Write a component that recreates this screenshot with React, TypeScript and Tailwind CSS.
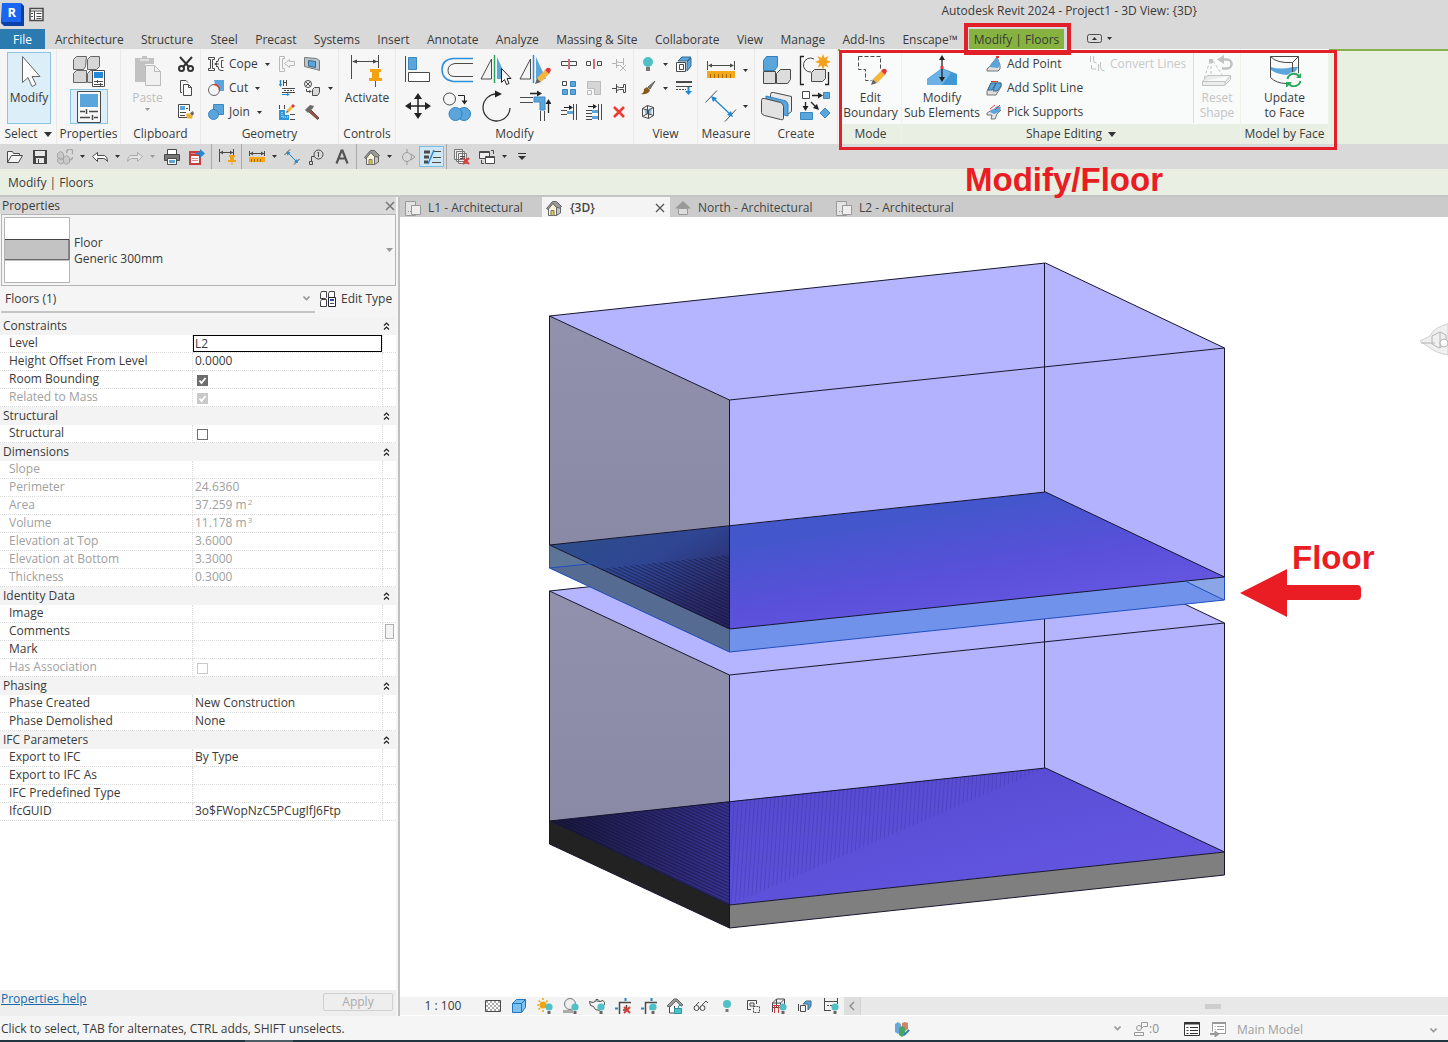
import type { ReactNode } from 'react';

const INK = '#4a4a4a';
const BLUE = '#5aa5dc';

function Ico({ w = 16, h = w, box, children }: { w?: number; h?: number; box?: string; children: ReactNode }) {
  return (
    <svg width={w} height={h} viewBox={box ?? `0 0 ${w} ${h}`} fill="none" stroke={INK} strokeWidth="1" className="shrink-0" aria-hidden="true">
      {children}
    </svg>
  );
}

function Caret({ dim = false }: { dim?: boolean }) {
  return (
    <svg width="5" height="3" viewBox="0 0 5 3" className="shrink-0" aria-hidden="true">
      <path d="M0 0h5L2.5 3z" fill={dim ? '#9a9a9a' : '#333'} />
    </svg>
  );
}

function Chevron() {
  return (
    <svg width="7" height="5" viewBox="0 0 7 5" fill="none" stroke="#9a9a9a" strokeWidth="1.6" className="pointer-events-none shrink-0" aria-hidden="true">
      <path d="M.5 .5l3 3 3-3" />
    </svg>
  );
}

/* ---------- shared icon pieces ---------- */

const bulb = (x: number, y: number) => (
  <g stroke="none">
    <circle cx={x} cy={y} r="3.6" fill="#4fc0c6" />
    <path d={`M${x - 1.5} ${y + 4}h3v3h-3z`} fill="#666" />
  </g>
);

const redCross = (x: number, y: number, s: number) => (
  <path d={`M${x} ${y}l${s} ${s}M${x + s} ${y}l${-s} ${s}`} stroke="#e03a34" strokeWidth="2" />
);

const pencil = (
  <g stroke="none">
    <path d="M16 30l2-6 4 4z" fill="#666" />
    <path d="M18 24l8-8 4 4-8 8z" fill="#f3b73e" />
    <path d="M26 16l2-2q3-1 4 2l-2 4z" fill="#e0393a" />
  </g>
);

const pin = (
  <g stroke="none" fill="#f2a30f">
    <path d="M20 14h11v3h-2v6h3v3H19v-3h3v-6h-2z" />
    <path d="M25 26h1v6h-1z" fill="#555" />
  </g>
);

const ruler = (
  <>
    <path d="M.5 1v9M27.5 1v9M2 5.500h24" />
    <path d="M1 5.500l4-2v4zM27 5.500l-4-2v4z" fill={INK} stroke="none" />
    <path d="M0 11h28v7H0z" fill="#f5a81c" stroke="none" />
    <path d="M3.500 14v4M7.500 14v4M11.500 14v4M15.500 14v4M19.500 14v4M23.500 14v4" stroke="#a86c00" />
  </>
);

const house = (
  <>
    <path d="M2.500 7.500L7 3l3.500 4.500v8h-8z" fill="#f7f3d4" stroke="#666" />
    <path d="M10.500 15.500l4-2.500V6l-4 2z" fill="#c4c4c4" stroke="#666" />
    <path d="M.5 8.500L6.500 1.500h4l5 5-2 1.500-3-.5L7 3.500l-5 6z" fill="#9a9a9a" stroke="#666" />
    <path d="M5 10.500h3v5H5z" fill="#e9c93c" stroke="#777" />
  </>
);

/* ---------- small ribbon icons ---------- */

const CutClip = () => (
  <Ico><path d="M2 1l9 10M14 1L5 11" stroke="#333" strokeWidth="2" /><circle cx="3.500" cy="12.500" r="2.500" stroke="#333" strokeWidth="2" /><circle cx="12.500" cy="12.500" r="2.500" stroke="#333" strokeWidth="2" /></Ico>
);
const CopyClip = () => (
  <Ico><path d="M4 12.500H2.500V.5H8l2 2" /><path d="M5.500 4.500h5l3 3v8h-8z" fill="#fafafa" /><path d="M10.500 4.500v3h3" /></Ico>
);
const MatchType = () => (
  <Ico><path d="M9 13.500H.5V.5h11V7" fill="#fff" /><path d="M2 2h5v4H2z" fill={BLUE} stroke="none" /><path d="M2 8.500h6M2 11.500h5M8 4.500h2" /><path d="M8 10l3-1 4 4-2 2-4-1z" fill="#f0b030" stroke="none" /><path d="M12 9l3-2 1 3-2 2z" fill="#666" stroke="none" /></Ico>
);
const Cope = () => (
  <Ico><path d="M.5 1.500h6v2h-2v9h2v2h-6v-2h2v-9h-2z" /><path d="M15.500 1.500H13q-3 0-3 4H8M15.500 14.500H13q-3 0-3-4H8M15.500 4.500h-2v7h2" /><path d="M8 8h3" /><path d="M6 8l3-2v4z" fill={INK} stroke="none" /></Ico>
);
const CutGeom = () => (
  <Ico><path d="M6 0h10v11H9z" fill={BLUE} stroke="none" /><circle cx="6" cy="10" r="5.500" fill="#f6f6f6" stroke="#666" /><path d="M6 4.500a5.500 5.500 0 0 1 5.500 6" stroke="#e03a34" strokeWidth="1.500" /></Ico>
);
const JoinGeom = () => (
  <Ico><path d="M5.500.5h10v10h-10z" fill={BLUE} stroke="#3b88c0" /><circle cx="5.500" cy="10.500" r="5" fill={BLUE} stroke="#3b88c0" /></Ico>
);
const JoinRoof = () => (
  <Ico><g stroke="#b9b9b9"><path d="M5.500 2.500v-2h-5v15h5v-3h-2v-10zM15.500 5.500h-5v-2l-5 4 5 4v-2h5z" /></g></Ico>
);
const WallJoin = () => (
  <Ico><path d="M1.500 0v6" stroke="#1e88d2" strokeWidth="1.500" /><path d="M0 4l1.500 3L3 4z" fill="#1e88d2" stroke="none" /><path d="M4.500 0v6M7.500 0v6M5 2.500h3M3 8.500h13M3 12.500h13" /><path d="M5 10.500h10" strokeDasharray="2 1" /><path d="M3 14.500h6" stroke="#1e88d2" /><path d="M8 13l3 1.500L8 16z" fill="#1e88d2" stroke="none" /></Ico>
);
const CutJoin = () => (
  <Ico><path d="M.5 1v4M5.500 1v4M11 10.500h5M11 15.500h5" /><path d="M0 6h6v5h4v5H0z" fill="#2f96dc" stroke="none" /><path d="M3 8v5h6" stroke="#fff" strokeDasharray="1 1" /><path d="M7 9l1-3 2 2z" fill="#666" stroke="none" /><path d="M8 6l4-4 2 2-4 4z" fill="#f3b73e" stroke="none" /><path d="M12 2l2-2 2 2-2 2z" fill="#e0393a" stroke="none" /></Ico>
);
const WallOpening = () => (
  <Ico><path d="M.5 1.500l12 1 3 2v10l-3-1-12-3z" fill="#b9c4cc" stroke="#777" /><path d="M4.500 4.500l7 1v6l-7-1.500z" fill={BLUE} stroke="#3a6a8c" /></Ico>
);
const BeamCol = () => (
  <Ico><circle cx="4" cy="4" r="3.500" /><path d="M1.500 1.500l5 5M6.500 1.500l-5 5" /><path d="M2.500 9v2.500H6" /><path d="M5 10l3 1.500L5 13z" fill={INK} stroke="none" /><path d="M8.500 9.500l2-2h5v5l-2 3h-5z" fill="#d8d8d8" /></Ico>
);
const Hammer = () => (
  <Ico><path d="M6 5l9 9-1.500 1.500L4 7z" fill="#9a5548" stroke="#70433a" /><path d="M1 6l5-5 4 1-1 2-5 5z" fill="#6a6a6a" stroke="none" /></Ico>
);
const SplitEl = () => <Ico><path d="M6 5.500H.5v4H6M10 5.500h5.500v4H10M3 7.500" /><path d="M8 3v10" stroke="#c8414b" strokeWidth="1.500" /><path d="M5 5.500h2M5 9.500h2M9 5.500h2M9 9.500h2" /></Ico>;
const SplitGap = () => <Ico><path d="M.5 5.500h4v4h-4zM11.500 5.500h4v4h-4z" /><path d="M8 3v10" stroke="#c8414b" strokeWidth="1.500" /></Ico>;
const Unpin = () => <Ico><g stroke="#b5b5b5"><path d="M1 7.500h4M5.500 3v9M5.500 5.500l3 1h4M5.500 9.500h3M12.500 2v7M9 9l6 6M15 9l-6 6" /></g></Ico>;
const ArrayEl = () => <Ico><path d="M1.500 1.500h4v4h-4z" /><path d="M9.500 1.500h5v5h-5zM1.500 9.500h5v5h-5zM9.500 9.500h5v5h-5z" fill={BLUE} stroke="#3b88c0" /></Ico>;
const ScaleEl = () => <Ico><path d="M1.500 1.500h13v13h-6v-6h-7z" fill="#d5d5d5" stroke="#bbb" /><path d="M1.500 10.500h4v4h-4z" stroke="#bbb" /></Ico>;
const PinEl = () => <Ico><path d="M1 8.500h4M5.500 4v9M5.500 6.500l3 1h4v-3h2v8h-2v-3h-4l-3 1" /></Ico>;
const TrimOne = () => <Ico><path d="M3 3.500h6" stroke="#222" /><path d="M8 1l4 2.500L8 6z" fill="#222" stroke="none" /><path d="M12.500 0v16M15.500 0v16M0 6.500h6M0 10.500h6" /><path d="M6 7h6v3H6z" fill={BLUE} stroke="none" /></Ico>;
const TrimMany = () => <Ico><path d="M2 2.500h6" stroke="#222" /><path d="M7 0l4 2.500L7 5z" fill="#222" stroke="none" /><path d="M12.500 0v16M15.500 0v16M0 6.500h6M0 9.500h6M0 12.500h6M0 15.500h6" /><path d="M6 6h6v3H6zM6 12h6v3H6z" fill={BLUE} stroke="none" /></Ico>;
const DeleteEl = () => <Ico><path d="M3 3l10 10M13 3L3 13" stroke="#ee3b33" strokeWidth="2.600" /></Ico>;
const Bulb = () => <Ico><circle cx="8" cy="6" r="5" fill="#4fc0c6" stroke="none" /><path d="M6 11h4v4H6z" fill="#777" stroke="none" /></Ico>;
const Brush = () => <Ico><path d="M8 7l7-6-5 8z" fill="#777" stroke="#666" /><path d="M0 14q4 0 4-5l3-2 3 3q-1 5-10 4z" fill="#8a5a1c" stroke="none" /></Ico>;
const DisplaceBox = () => <Ico><path d="M4.500 6l7-2v6l-6 1z" fill={BLUE} fillOpacity=".7" stroke="none" /><path d="M2.500 4.500l5-3 6 2v8l-5 3-6-2zM2.500 4.500l6 2 5-3M8.500 6.500v8M7.500 1.500v8l-5 3M7.500 9.500l6 2" /></Ico>;
const CubeView = () => <Ico><path d="M.5 6.500h9v9h-9z" fill="#fff" /><path d="M3.500 8.500h4v5h-4z" /><path d="M2 5l4-4h9l-4 4zM11 6l4-4v8l-4 5z" fill={BLUE} stroke="#3b6a8c" /></Ico>;
const Linework = () => <Ico><path d="M0 2h16" strokeWidth="2" /><path d="M0 6.500h16" /><path d="M0 9.500h10" strokeDasharray="2 1" /><path d="M12.500 7v6" stroke="#1e88d2" strokeWidth="2" /><path d="M9 11h7l-3.500 4z" fill="#1e88d2" stroke="none" /></Ico>;
const AddPoint = () => <Ico><path d="M1 13l3-3 7-9 3 8v4l-2 2H1z" fill="#ddd" stroke="#777" /><path d="M3 11l8-10 3 8-2 3z" fill={BLUE} stroke="none" /><path d="M10 0h3v2h-3z" fill="#e03a34" stroke="none" /></Ico>;
const AddSplit = () => <Ico><path d="M1 11l4-8h10v4l-5 8H1z" fill="#ddd" stroke="#777" /><path d="M5 3h5l-4 7H2zM10 3h5v3l-4 5H7z" fill={BLUE} stroke="#3b6a8c" /><path d="M5 1.500h7" stroke="#e03a34" /></Ico>;
const PickSup = () => <Ico><path d="M1 9l5-3h9l-4 4-2 5H5l1-4H1z" fill="#e4e4e4" stroke="#777" /><path d="M4 8l7-6 4 1-2 5-5 2z" fill={BLUE} stroke="none" /><path d="M4 5l5-4M9 6l5-5" stroke="#e03a34" /></Ico>;
const ConvertLines = () => <Ico><g stroke="#c0c0c0"><path d="M1.500 0v6M4.500 0v4q0 3 3 3M2.500 9v4H7M9.500 8v7M11.500 6v5q0 4 4 4" /></g></Ico>;

/* ---------- large ribbon icons ---------- */

const Arrow = () => <Ico w={32}><path d="M9.500 1.500v26l5.500-5 4 9 4-2-4-8h8z" fill="#fff" stroke="#666" /></Ico>;
const TypeProps = () => (
  <Ico w={34} h={32}>
    <g fill="#d6d6d6" stroke="#666">
      <path d="M1.500 4.500l3-3h10l-1 10-2 3h-10zM15.500 4.500l3-3h9v10l-3 3h-9zM1.500 18.500l3-3h10v12h-13zM15.500 18.500l3-3h9v12h-12z" />
    </g>
    <path d="M20.500 15.500h12v16h-12z" fill="#fff" />
    <path d="M22 17h9v6h-9z" fill="#2389d7" stroke="none" />
    <path d="M22 26.500h9M22 29.500h9M25.500 25v3M28.500 28v3" />
  </Ico>
);
const PropsPalette = () => (
  <Ico w={24} h={32}><path d="M.5.5h23v31H.5z" fill="#f8f8f8" /><path d="M3 3h18v13H3z" fill={BLUE} stroke="none" /><path d="M3 20.500h5M12 20.500h9M9.500 18v5M3 26.500h10M17 26.500h4M15.500 24v5" strokeWidth="1.500" /></Ico>
);
const PasteClip = () => (
  <Ico w={32}><path d="M3 3h7V1h5v2h7v6h-9v18H3z" fill="#c2c2c2" stroke="none" /><path d="M8 5h9" stroke="#fff" /><path d="M13.500 10.500h9l6 6v14h-15z" fill="#f1f1f1" stroke="#bbb" /><path d="M22.500 10.500v6h6" stroke="#bbb" /></Ico>
);
const ActivateDim = () => <Ico w={34} h={32}><path d="M1.500 0v24M28.500 0v13M3 6.500h25" /><path d="M2 6.500l5-2v4zM28 6.500l-5-2v4z" fill={INK} stroke="none" />{pin}</Ico>;
const AlignEl = () => <Ico w={32}><path d="M3.500 2v26" /><path d="M6.500 3.500h8v12h-8z" fill={BLUE} stroke="#3b88c0" /><path d="M6.500 18.500h21v9h-21z" fill="#fff" /></Ico>;
const OffsetEl = () => <Ico w={32}><path d="M32 4.500H12q-11 1-11 11t11 12h20" stroke="#2f8fd8" strokeWidth="1.500" /><path d="M32 9.500H14q-7 1-7 7t7 6h18" /></Ico>;
const mirror = (
  <>
    <path d="M11.500 5v20H1z" fill="#f3f3f3" />
    <path d="M17 3v22h10z" fill={BLUE} stroke="none" />
  </>
);
const MirrorPick = () => <Ico w={32}>{mirror}<path d="M14.500 1v28" stroke="#2aa35b" strokeWidth="1.500" /><path d="M21.500 14.500v14l3-3 2 5 2.500-1-2-5h4z" fill="#fff" stroke="#222" /></Ico>;
const MirrorDraw = () => <Ico w={32}>{mirror}<path d="M14.500 1v28" stroke="#2f8fd8" strokeWidth="1.500" />{pencil}</Ico>;
const MoveEl = () => <Ico w={32}><path d="M16 6v20M6 16h20" stroke="#222" strokeWidth="1.500" /><path d="M16 3l4 6h-8zM16 29l4-6h-8zM3 16l6-4v8zM29 16l-6-4v8z" fill="#222" stroke="none" /></Ico>;
const CopyEl = () => <Ico w={32}><circle cx="8.500" cy="9" r="6" /><path d="M17 5.500h6.500V12" stroke="#222" /><path d="M20.500 10.500h6l-3 4z" fill="#222" stroke="none" /><circle cx="23" cy="24" r="6.500" fill={BLUE} stroke="#2f80bd" /><circle cx="14.500" cy="24" r="6.500" fill={BLUE} stroke="#2f80bd" /></Ico>;
const RotateEl = () => <Ico w={32}><path d="M17 4A13.500 13.500 0 1 0 30 18" stroke="#333" strokeWidth="1.300" /><path d="M15 .5l7 3.500-7 3.500z" fill="#222" stroke="none" /></Ico>;
const TrimEl = () => <Ico w={32}><path d="M11 3.500h8M29.500 13v10" stroke="#222" strokeWidth="1.300" /><path d="M18 .5l5 3-5 3zM26.500 14h6l-3-5z" fill="#222" stroke="none" /><path d="M1 7.500h13M1 12.500h13M21.500 21v10M25.500 21v10" /><path d="M15 7h11v13h-5v-8h-6z" fill={BLUE} stroke="#3b88c0" /></Ico>;
const MeasureEl = () => <Ico w={28} h={20}>{ruler}</Ico>;
const DimEl = () => <Ico w={32}><path d="M.5 12.500L12 .5M20 31.500l11-12" /><path d="M8 8l18 17" stroke="#1e88d2" strokeWidth="1.300" /><path d="M6 6l6 2-4 4zM28 27l-6-2 4-4z" fill="#1e88d2" stroke="none" /></Ico>;
const AssemblyEl = () => <Ico w={32}><path d="M2.500 17.500h12v12h-12zM15.500 19.500l4-4h10v10l-3 4h-11z" fill="#dcdcdc" /><path d="M2.500 6.500l3-4h11v10l-3 4h-11z" fill={BLUE} stroke="#2f80bd" /></Ico>;
const GroupEl = () => <Ico w={32}><path d="M5 2.500H1.500v28H5M26 30.500h3.500V18" stroke="#222" strokeWidth="1.300" /><path d="M15 5a7 7 0 1 0-3 13" /><path d="M12.500 18.500l3-3h11v9l-3 3h-11z" fill="#dcdcdc" /><path d="M24 0l1.500 4 4-2-2 4L32 8l-4.500 1.500 2 4-4-2L24 16l-1.500-4.500-4 2 2-4L16 8l4.500-2-2-4 4 2z" fill="#f4a01c" stroke="none" /></Ico>;
const PartsEl = () => <Ico w={32}><path d="M9.500 4.500q0-3 3-2l18 4v15l-4 3-17-5z" fill="#e9e9e9" /><path d="M5 6l20 5 2 3v12L5 20z" fill={BLUE} stroke="#2f80bd" /><path d="M.5 10.500q0-3 3-2l16 4q3 1 3 4v12q0 2-3 1l-16-4q-3-1-3-3z" fill="#e2e2e2" /></Ico>;
const SimilarEl = () => <Ico w={32}><path d="M3.500 1.500h7v7h-7z" fill="#fff" /><path d="M13 5.500h7M6.500 12v6M12 12l5 5" stroke="#222" strokeWidth="1.300" /><path d="M19 2.500l5 3-5 3zM3.500 16h6l-3 5zM20 20l-6-2 4-4z" fill="#222" stroke="none" /><path d="M24.500 2.500h6v6h-6zM1.500 22.500h12v7h-12zM26 18l5 5-5 5-5-5z" fill={BLUE} stroke="#3b88c0" /></Ico>;
const EditBoundary = () => <Ico w={32}><path d="M3.500 1.500h22v13M3.500 1.500v13h7v11h6" strokeDasharray="4 2" />{pencil}</Ico>;
const SubElements = () => (
  <Ico w={32}><path d="M1 30V24l15-11 15 6v11z" fill="#3f97d6" stroke="none" /><path d="M1 25l15-12 9 5-9 12H1z" fill="#6cb2e4" stroke="none" /><path d="M16 4v21" stroke="#222" strokeWidth="1.300" /><path d="M16 0l3 5h-6zM16 27l3-5h-6z" fill="#222" stroke="none" /><path d="M14.500 11h3v3h-3z" fill="#e03a34" stroke="none" /></Ico>
);
const ResetShape = () => (
  <Ico w={32}><g stroke="#c2c2c2"><path d="M1.500 26.500l5-6h23l-5 6zM1.500 26.500v4h22l6-6v-4M24 26.500v4" fill="#ececec" /><path d="M9 6L3 24M12 6l10 15M10 6v14" strokeDasharray="3 2" /><path d="M22 4.500h4a4.500 4.500 0 0 1 0 9h-5" strokeWidth="2.500" /></g><path d="M16 4.500l7-4.500v9zM8 4h4v4H8z" fill="#c2c2c2" stroke="none" /></Ico>
);
const UpdateFace = () => (
  <Ico w={32}><path d="M2 12q9 3 22 0h5q-2 7-12 8-10-1-15-5z" fill={BLUE} stroke="none" /><path d="M1.500 1.500v21q6 6 16 6M1.500 1.500h28v17M1.500 1.500q6 7 22 6l6-6M23.500 7.500V17" /><circle cx="25" cy="25" r="8" fill="#fafafa" stroke="none" /><path d="M18.500 24a6.500 6.500 0 0 1 12-2M31.500 26a6.500 6.500 0 0 1-12 2" stroke="#2aa95a" strokeWidth="2" /><path d="M27 23h6v-6zM23 27h-6v6z" fill="#2aa95a" stroke="none" /></Ico>
);

/* ---------- ribbon building blocks ---------- */

function Panel({ title, width, children, more = false, ctx = false }: { title: string; width: string; children: ReactNode; more?: boolean; ctx?: boolean }) {
  return (
    <section className={`${width} flex shrink-0 flex-col border-r ${ctx ? 'border-[#eef3ea] bg-[#f9fafa]' : 'border-[#e9e9e9] bg-[#f6f6f6]'}`}>
      <div className="flex h-[75px] pt-[3px]">{children}</div>
      <h2 className={`flex h-5 items-center justify-center gap-[6px] whitespace-nowrap ${ctx ? 'bg-[#e9f0e3]' : ''}`}>
        {title}
        {more && <svg width="8" height="5" viewBox="0 0 8 5" aria-hidden="true"><path d="M0 0h8L4 5z" fill="#333" /></svg>}
      </h2>
    </section>
  );
}

function Big({ icon, lines, dim = false, on = false, width = 'w-full' }: { icon: ReactNode; lines: string[]; dim?: boolean; on?: boolean; width?: string }) {
  return (
    <button type="button" className={`${width} flex h-[72px] shrink-0 flex-col items-center gap-[3px] pt-[2px] leading-[15px] ${on ? 'border border-[#8cc4e4] bg-[#dceef8]' : 'border border-transparent'} ${dim ? 'text-[#c4c4c4]' : ''}`}>
      {icon}
      <span className="whitespace-nowrap">{lines.map((l) => <span key={l} className="block">{l}</span>)}</span>
    </button>
  );
}

function Tool({ label, icon, className = '' }: { label: string; icon: ReactNode; className?: string }) {
  return <button type="button" aria-label={label} className={`flex shrink-0 items-center justify-center ${className}`}>{icon}</button>;
}

function RowTool({ icon, label, menu = false, dim = false }: { icon: ReactNode; label: string; menu?: boolean; dim?: boolean }) {
  return (
    <button type="button" className={`flex h-6 items-center gap-[5px] whitespace-nowrap ${dim ? 'text-[#c8c8c8]' : ''}`}>
      {icon}
      {label}
      {menu && <span className="pl-[2px]"><Caret /></span>}
    </button>
  );
}

const TABS = ['Architecture', 'Structure', 'Steel', 'Precast', 'Systems', 'Insert', 'Annotate', 'Analyze', 'Massing & Site', 'Collaborate', 'View', 'Manage', 'Add-Ins', 'Enscape™'];

function TitleBar() {
  return (
    <header className="flex h-7 items-center bg-[#d9d9d9]">
      <div className="flex flex-1 items-center gap-[5px]">
        <svg width="24" height="24" viewBox="0 0 24 24" aria-hidden="true">
          <path d="M2 1h19l3 3v20H4l-3-3z" fill="#0b3fa8" />
          <path d="M2 1h19v19H2z" fill="#1a66f0" />
          <text x="7.500" y="15" fill="#fff" fontSize="13" fontWeight="700" fontFamily="Open Sans, sans-serif">R</text>
        </svg>
        <Ico w={15} h={15}><path d="M1 1.500h13v12H1z" fill="#fff" strokeWidth="1.500" /><path d="M1 4h13M5.500 4v10M2 6.500h2M2 9.500h2M7.500 6.500h5M7.500 9.500h5M7.500 11.500h5" /></Ico>
      </div>
      <h1 className="whitespace-nowrap pb-[7px]">Autodesk Revit 2024 - Project1 - 3D View: {'{3D}'}</h1>
      <div className="w-[251px] shrink-0" />
    </header>
  );
}

function RibbonTabs() {
  return (
    <nav className="flex h-[21px] shrink-0 items-stretch whitespace-nowrap bg-[#d9d9d9] leading-[21px]">
      <a href="#file" className="mt-px w-[45px] bg-[#2b7ab0] text-center text-white">File</a>
      <div className="flex w-[924px] shrink-0 justify-between pl-[10px] pr-[11px] pt-px">
        {TABS.map((t) => <a key={t} href={`#${t}`}>{t}</a>)}
      </div>
      <a href="#modify-floors" className="relative mt-px w-[95px] bg-[#86b33f] text-center">
        Modify | Floors
        <span className="pointer-events-none absolute -bottom-[6px] -left-[5px] -right-[7px] -top-[6px] z-20 border-4 border-[#e1202a]" />
      </a>
      <button type="button" aria-label="Minimize ribbon" className="ml-[23px] flex items-center gap-[5px]">
        <Ico w={15} h={9}><rect x=".5" y=".5" width="14" height="8" rx="2" /><path d="M5 6h5L7.500 3z" fill="#333" stroke="none" /></Ico>
        <Caret />
      </button>
    </nav>
  );
}

function Ribbon() {
  return (
    <div className="flex h-[95px] shrink-0 bg-[#f6f6f6]">
      <Panel title="Select" width="w-[57px]" more>
        <Big on width="ml-[7px] w-[44px]" icon={<Arrow />} lines={['Modify']} />
      </Panel>
      <Panel title="Properties" width="w-[64px]">
        <div className="flex w-full flex-col items-center">
          <Tool label="Type properties" className="h-[37px] w-[38px]" icon={<TypeProps />} />
          <Tool label="Properties palette" className="h-[35px] w-[38px] border border-[#8cc4e4] bg-[#dceef8]" icon={<PropsPalette />} />
        </div>
      </Panel>
      <Panel title="Clipboard" width="w-[80px]">
        <button type="button" className="flex w-[53px] flex-col items-center gap-[3px] pt-[3px] leading-[15px] text-[#bdbdbd]">
          <PasteClip />
          Paste
          <Caret dim />
        </button>
        <div className="grid grid-rows-3">
          <Tool label="Cut" className="w-6" icon={<CutClip />} />
          <Tool label="Copy" className="w-6" icon={<CopyClip />} />
          <Tool label="Match type" className="w-6" icon={<MatchType />} />
        </div>
      </Panel>
      <Panel title="Geometry" width="w-[138px]">
        <div className="w-[74px] shrink-0 pl-[7px]">
          <RowTool icon={<Cope />} label="Cope" menu />
          <RowTool icon={<CutGeom />} label="Cut" menu />
          <RowTool icon={<JoinGeom />} label="Join" menu />
        </div>
        <div className="grid grid-cols-[24px_26px_10px] grid-rows-3">
          <Tool label="Join roof" icon={<JoinRoof />} />
          <Tool label="Wall opening" icon={<WallOpening />} />
          <span />
          <Tool label="Wall joins" icon={<WallJoin />} />
          <Tool label="Beam joins" icon={<BeamCol />} />
          <Tool label="More joins" icon={<Caret />} />
          <Tool label="Cut profile" icon={<CutJoin />} />
          <Tool label="Demolish" icon={<Hammer />} />
        </div>
      </Panel>
      <Panel title="Controls" width="w-[57px]">
        <Big icon={<ActivateDim />} lines={['Activate']} />
      </Panel>
      <Panel title="Modify" width="w-[238px]">
        <div className="grid shrink-0 grid-cols-[repeat(4,39px)] grid-rows-2 pl-[2px]">
          <Tool label="Align" icon={<AlignEl />} />
          <Tool label="Offset" icon={<OffsetEl />} />
          <Tool label="Mirror pick" icon={<MirrorPick />} />
          <Tool label="Mirror draw" icon={<MirrorDraw />} />
          <Tool label="Move" icon={<MoveEl />} />
          <Tool label="Copy element" icon={<CopyEl />} />
          <Tool label="Rotate" icon={<RotateEl />} />
          <Tool label="Trim" icon={<TrimEl />} />
        </div>
        <div className="grid grid-cols-[repeat(3,25px)] grid-rows-3 pl-[2px]">
          <Tool label="Split" icon={<SplitEl />} />
          <Tool label="Split with gap" icon={<SplitGap />} />
          <Tool label="Unpin" icon={<Unpin />} />
          <Tool label="Array" icon={<ArrayEl />} />
          <Tool label="Scale" icon={<ScaleEl />} />
          <Tool label="Pin" icon={<PinEl />} />
          <Tool label="Trim single" icon={<TrimOne />} />
          <Tool label="Trim multiple" icon={<TrimMany />} />
          <Tool label="Delete" icon={<DeleteEl />} />
        </div>
      </Panel>
      <Panel title="View" width="w-[64px]">
        <div className="grid grid-cols-[24px_10px_28px] grid-rows-3 pl-[2px]">
          <Tool label="Hide in view" icon={<Bulb />} />
          <Tool label="Hide options" icon={<Caret />} />
          <Tool label="Selection box" icon={<CubeView />} />
          <Tool label="Override graphics" icon={<Brush />} />
          <Tool label="Override options" icon={<Caret />} />
          <Tool label="Linework" icon={<Linework />} />
          <Tool label="Displace" icon={<DisplaceBox />} />
        </div>
      </Panel>
      <Panel title="Measure" width="w-[57px]">
        <div className="grid grid-cols-[36px_12px] grid-rows-2 pl-[5px]">
          <Tool label="Measure" icon={<MeasureEl />} />
          <Tool label="Measure options" icon={<Caret />} />
          <Tool label="Dimension" icon={<DimEl />} />
          <Tool label="Dimension options" icon={<Caret />} />
        </div>
      </Panel>
      <Panel title="Create" width="w-[83px]">
        <div className="grid grid-cols-[repeat(2,38px)] grid-rows-2 pl-[3px]">
          <Tool label="Create assembly" icon={<AssemblyEl />} />
          <Tool label="Create group" icon={<GroupEl />} />
          <Tool label="Create parts" icon={<PartsEl />} />
          <Tool label="Create similar" icon={<SimilarEl />} />
        </div>
      </Panel>

      <div className="relative flex shrink-0 border-t-2 border-[#8ab04a] pl-[2px]">
        <div className="-mt-[2px] flex">
          <Panel title="Mode" width="w-[62px]" ctx>
            <Big icon={<EditBoundary />} lines={['Edit', 'Boundary']} />
          </Panel>
          <Panel title="Shape Editing" width="w-[339px]" more ctx>
            <Big width="w-[80px]" icon={<SubElements />} lines={['Modify', 'Sub Elements']} />
            <div className="w-[107px] shrink-0 pl-[4px]">
              <RowTool icon={<AddPoint />} label="Add Point" />
              <RowTool icon={<AddSplit />} label="Add Split Line" />
              <RowTool icon={<PickSup />} label="Pick Supports" />
            </div>
            <div className="h-[71px] w-[105px] shrink-0 border-r border-[#dcdcdc]">
              <RowTool icon={<ConvertLines />} label="Convert Lines" dim />
            </div>
            <Big width="w-[46px]" icon={<ResetShape />} lines={['Reset', 'Shape']} dim />
          </Panel>
          <Panel title="Model by Face" width="w-[88px]" ctx>
            <Big icon={<UpdateFace />} lines={['Update', 'to Face']} />
          </Panel>
        </div>
        <div className="pointer-events-none absolute -bottom-[6px] -right-[8px] -top-px left-px z-10 border-[3px] border-[#e1202a]" />
        <p className="pointer-events-none absolute left-[127px] top-[111px] z-10 whitespace-nowrap font-['Liberation_Sans',Arial,sans-serif] text-[33px] font-bold leading-9 text-[#ea1c24]">Modify/Floor</p>
      </div>
      <div className="flex-1 border-t-2 border-[#8ab04a] bg-[#e7f0e1]" />
    </div>
  );
}

function Sep() {
  return <span className="flex h-full w-[5px] shrink-0 justify-center"><span className="w-px bg-[#a8a8a8]" /></span>;
}

function Q({ label, children, on = false }: { label: string; children: ReactNode; on?: boolean }) {
  return <Tool label={label} className={`w-[25px] ${on ? 'h-[21px] border border-[#7dbde2] bg-[#cfe6f4]' : 'h-full'}`} icon={children} />;
}

function QCaret({ label, dim = false }: { label: string; dim?: boolean }) {
  return <Tool label={label} className="h-full w-[10px]" icon={<Caret dim={dim} />} />;
}

function QuickAccess() {
  return (
    <div className="flex h-[25px] shrink-0 items-center bg-[#d9d9d9] pl-[2px]">
      <div className="flex h-full items-center pr-[2px]">
        <Q label="Open"><Ico><path d="M.5 13.500v-11h5l1 2h6v2M.5 13.500l4-7h11l-4 7z" fill="#f4f4f4" /></Ico></Q>
        <Q label="Save"><Ico><path d="M1 1h14v14H1z" fill="#444" stroke="none" /><path d="M3 2h10v5H3zM4 9h8v5H4z" fill="#e8e8e8" stroke="none" /><path d="M6.500 10v4" /></Ico></Q>
        <Q label="Synchronize"><Ico><g stroke="#a6a6a6" fill="#c9c9c9"><path d="M.5 4.500l3-2 3 2v4l-3 2-3-2zM6.500 8.500l3-2 3 2v5l-3 2-3-2zM.5 10l3-1 3 2v3l-3 1-3-2z" /><path d="M10 4a3 3 0 1 1 5 1M15.500 8a3 3 0 0 1-3 3" fill="none" strokeWidth="1.500" /></g></Ico></Q>
        <QCaret label="Synchronize options" />
        <Q label="Undo"><Ico><path d="M.5 7.500l5-4v3h7q3 1 3 6-2-3-4-3h-6v3z" fill="#fff" /></Ico></Q>
        <QCaret label="Undo list" />
        <Q label="Redo"><Ico><path d="M15.500 7.500l-5-4v3h-7q-3 1-3 6 2-3 4-3h6v3z" fill="#e4e4e4" stroke="#aaa" /></Ico></Q>
        <QCaret label="Redo list" dim />
      </div>
      <Q label="Print"><Ico><path d="M3.500 5V.5h9V5" fill="#fff" /><path d="M.5 5.500h15v6H.5z" fill="#777" /><path d="M3.500 9.500h9v6h-9z" fill="#fff" /><path d="M5 11h6v3H5z" fill={BLUE} stroke="none" /></Ico></Q>
      <Q label="Export PDF"><Ico><path d="M0 2h12v14H0z" fill="#c93b3f" stroke="none" /><path d="M2 7h8v7H2z" fill="#fff" stroke="none" /><path d="M2 4.500h4M3 9.500h6M3 11.500h6" stroke="#d88" /><path d="M6 4.500h6" stroke="#2389d7" strokeWidth="2" /><path d="M11 0l5 4.500L11 9z" fill="#2389d7" stroke="none" /></Ico></Q>
      <Sep />
      <Q label="Activate dimensions"><Ico w={18} h={16}><path d="M1.500 0v13M15.500 0v6M2 3.500h13" /><path d="M2 3.500l3-2v4zM15 3.500l-3-2v4z" fill={INK} stroke="none" /><path d="M11 6h6v2h-1v3h2v2h-8v-2h2V8h-1zM13.500 13h1v3h-1z" fill="#f2a30f" stroke="none" /></Ico></Q>
      <Sep />
      <Q label="Measure"><Ico w={16} h={12}><path d="M.5 0v5M15.500 0v5M1 2.500h14" /><path d="M1 2.500l3-2v4zM15 2.500l-3-2v4z" fill={INK} stroke="none" /><path d="M0 6h16v5H0z" fill="#f5a81c" stroke="none" /><path d="M2.500 8v3M5.500 8v3M8.500 8v3M11.500 8v3" stroke="#a86c00" /></Ico></Q>
      <QCaret label="Measure options" />
      <Q label="Aligned dimension"><Ico box="0 0 32 32"><g strokeWidth="2"><path d="M1 12L12 1M20 31l11-11" /><path d="M8 8l17 17" stroke="#1e88d2" /></g><path d="M5 5l8 2-6 6zM28 28l-8-2 6-6z" fill="#1e88d2" stroke="none" /></Ico></Q>
      <Q label="Tag"><Ico><circle cx="9.500" cy="5.500" r="4.500" /><path d="M9.500 3v5M8.500 4l1-1M5 7.500H2.500V12" /><path d="M.5 12.500h3v3h-3z" /></Ico></Q>
      <Q label="Text"><Ico><path d="M2.500 14.500L7.500 1.500h1l5 13M4.500 9.500h7" stroke="#555" strokeWidth="2.200" /></Ico></Q>
      <Sep />
      <Q label="Default 3D view"><Ico>{house}</Ico></Q>
      <QCaret label="3D view options" />
      <Q label="Section"><Ico><circle cx="8" cy="8" r="4.500" stroke="#999" /><path d="M8 0v3M8 13v3M12 5l4 3-4 3" stroke="#999" /></Ico></Q>
      <Q label="Thin lines" on><Ico w={18} h={16}><path d="M1 3h6M1 8h5M1 13h4" strokeWidth="3" /><path d="M11 2.500h7M10 8.500h8M9 13.500h9" /><path d="M11 1L5 15" stroke="#2389d7" strokeWidth="1.500" /></Ico></Q>
      <Sep />
      <Q label="Close inactive views"><Ico><path d="M.5.5h8v10h-8zM2.500 2.500h8v10h-8zM4.500 4.500h8v10h-8z" fill="#eee" stroke="#777" /><path d="M6 7.500h5M6 9.500h3" />{redCross(9, 9, 6)}</Ico></Q>
      <Q label="Switch windows"><Ico><path d="M.5 2.500h10v7H.5z" fill="#eee" /><path d="M6.500 7.500h9v7h-9z" fill="#fff" /><path d="M.5 3.500h10M6.500 8.500h9M12 1.500h2.500V5M2.500 11v3.500H5" /></Ico></Q>
      <QCaret label="Window list" />
      <Q label="Customize"><Ico w={8} h={7}><path d="M0 .5h8" stroke="#333" /><path d="M0 3h8L4 7z" fill="#333" stroke="none" /></Ico></Q>
    </div>
  );
}

/* ---------- properties palette ---------- */

type Row = { name: string; value?: string; sup?: string; check?: boolean; ro?: boolean; boxed?: boolean; assoc?: boolean };

const GROUPS: { title: string; rows: Row[] }[] = [
  { title: 'Constraints', rows: [
    { name: 'Level', value: 'L2', boxed: true },
    { name: 'Height Offset From Level', value: '0.0000' },
    { name: 'Room Bounding', check: true },
    { name: 'Related to Mass', check: true, ro: true },
  ] },
  { title: 'Structural', rows: [{ name: 'Structural', check: false }] },
  { title: 'Dimensions', rows: [
    { name: 'Slope', value: '', ro: true },
    { name: 'Perimeter', value: '24.6360', ro: true },
    { name: 'Area', value: '37.259 m', sup: '2', ro: true },
    { name: 'Volume', value: '11.178 m', sup: '3', ro: true },
    { name: 'Elevation at Top', value: '3.6000', ro: true },
    { name: 'Elevation at Bottom', value: '3.3000', ro: true },
    { name: 'Thickness', value: '0.3000', ro: true },
  ] },
  { title: 'Identity Data', rows: [
    { name: 'Image', value: '' },
    { name: 'Comments', value: '', assoc: true },
    { name: 'Mark', value: '' },
    { name: 'Has Association', check: false, ro: true },
  ] },
  { title: 'Phasing', rows: [
    { name: 'Phase Created', value: 'New Construction' },
    { name: 'Phase Demolished', value: 'None' },
  ] },
  { title: 'IFC Parameters', rows: [
    { name: 'Export to IFC', value: 'By Type' },
    { name: 'Export to IFC As', value: '' },
    { name: 'IFC Predefined Type', value: '' },
    { name: 'IfcGUID', value: '3o$FWopNzC5PCugIfJ6Ftp' },
  ] },
];

function CheckBox({ id, on, ro }: { id: string; on: boolean; ro: boolean }) {
  const look = on ? (ro ? 'border-[#c9c9c9] bg-[#c9c9c9]' : 'border-[#6d6d6d] bg-[#6d6d6d]') : ro ? 'border-[#c9c9c9] bg-white' : 'border-[#6d6d6d] bg-white';
  return (
    <span className="relative ml-1 mt-[2px] block size-[11px]">
      <input id={id} type="checkbox" defaultChecked={on} disabled={ro} className={`block size-[11px] appearance-none border ${look}`} />
      {on && <svg width="11" height="11" viewBox="0 0 11 11" className="pointer-events-none absolute inset-0" aria-hidden="true"><path d="M2.500 5.500l2 2.500 4-5" fill="none" stroke="#fff" strokeWidth="1.800" /></svg>}
    </span>
  );
}

function PropertyRow({ row, id }: { row: Row; id: string }) {
  const ro = !!row.ro;
  return (
    <tr className={`h-[18px] bg-white ${ro ? 'text-[#a0a0a0]' : ''}`}>
      <th scope="row" className="border-b border-r border-dotted border-[#dcdcdc] pl-[9px] text-left font-normal"><label htmlFor={id} className="block h-[17px] leading-4">{row.name}</label></th>
      <td className="border-b border-r border-dotted border-[#dcdcdc]">
        {row.check !== undefined ? (
          <CheckBox id={id} on={row.check} ro={ro} />
        ) : row.sup ? (
          <output id={id} className="flex h-[17px] gap-px pl-[2px]">{row.value}<span className="text-[8px] leading-[9px]">{row.sup}</span></output>
        ) : (
          <input id={id} type="text" defaultValue={row.value} readOnly={ro} className={`block w-full bg-transparent leading-4 outline-none ${row.boxed ? 'h-[17px] border border-black pl-px' : 'mb-px h-4 pl-[2px]'}`} />
        )}
      </td>
      <td className="border-b border-dotted border-[#dcdcdc]">
        {row.assoc && <button type="button" aria-label="Associate parameter" className="ml-[2px] block h-[15px] w-[9px] border border-[#b0b0b0] bg-[#f4f4f4]" />}
      </td>
    </tr>
  );
}

function Properties() {
  return (
    <aside className="flex w-[400px] shrink-0 flex-col border-r-2 border-[#c0c0c0] bg-[#f5f5f5] pr-[2px]">
      <div className="flex h-[17px] items-center justify-between bg-[#d9d9d9] pl-[2px] pr-px">
        <h2>Properties</h2>
        <button type="button" aria-label="Close properties"><Ico w={10}><path d="M1 1l8 8M9 1L1 9" stroke="#777" strokeWidth="1.500" /></Ico></button>
      </div>
      <button type="button" className="ml-px flex h-[72px] items-center border border-[#b4b4b4] pl-[2px] pr-[2px] text-left leading-4">
        <svg width="66" height="66" viewBox="0 0 66 66" aria-hidden="true">
          <path d="M.5.5h65v65H.5z" fill="#fff" stroke="#b4b4b4" />
          <path d="M1 22.500h64v20H1" fill="#c3c3c3" stroke="#444" />
          <path d="M1 43h64" stroke="#888" />
        </svg>
        <span className="flex-1 pl-1 pt-[2px]"><span className="block">Floor</span><span className="block">Generic 300mm</span></span>
        <svg width="7" height="4" viewBox="0 0 7 4" aria-hidden="true"><path d="M0 0h7L3.500 4z" fill="#999" /></svg>
      </button>
      <div className="flex h-[31px] pb-1">
        <div className="relative ml-px flex w-[314px] items-center border-b-2 border-[#c4c4c4]">
          <select aria-label="Element filter" className="w-full appearance-none bg-transparent pl-1 outline-none"><option>Floors (1)</option></select>
          <span className="pointer-events-none absolute right-[5px] top-[10px]"><Chevron /></span>
        </div>
        <button type="button" className="ml-[5px] flex h-[26px] items-center gap-1 whitespace-nowrap">
          <Ico w={17} h={16}><path d="M.5 2.500l1-2h5v6l-1 1h-5zM8.500 2.500l1-2h5v6h-6zM.5 10.500l1-2h5v7h-6z" fill="#fff" stroke="#444" /><path d="M8.500 6.500h7v9h-7z" fill="#fff" stroke="#223" /><path d="M10 8h4v2h-4z" fill="#2a4fa0" stroke="none" /><path d="M10 12.500h4" /></Ico>
          Edit Type
        </button>
      </div>
      <div className="flex-1 bg-white">
        <table className="w-full table-fixed border-separate border-spacing-0 leading-4">
          <colgroup><col className="w-[193px]" /><col /><col className="w-[13px]" /></colgroup>
          {GROUPS.map((g) => (
            <tbody key={g.title}>
              <tr className="h-[18px] bg-[#f3f3f3]">
                <th colSpan={2} className="pl-[3px] text-left font-normal">{g.title}</th>
                <td>
                  <button type="button" aria-label={`Collapse ${g.title}`} className="block"><Ico w={7} h={8}><path d="M1 3.500l2.500-2.500L6 3.500M1 7.500L3.500 5 6 7.500" stroke="#222" strokeWidth="1.200" /></Ico></button>
                </td>
              </tr>
              {g.rows.map((r) => <PropertyRow key={r.name} row={r} id={`${g.title}-${r.name}`} />)}
            </tbody>
          ))}
        </table>
      </div>
      <div className="flex h-[26px] justify-between bg-[#eeeeee] pl-px pr-[3px]">
        <a href="#help" className="pt-px text-[#1a6aa8] underline">Properties help</a>
        <button type="button" disabled className="mt-[3px] h-[18px] w-[70px] rounded-[2px] border border-[#d0d0d0] leading-4 text-[#aaa]">Apply</button>
      </div>
    </aside>
  );
}

/* ---------- drawing area ---------- */

const SheetIcon = () => <Ico><path d="M.5 1.500h10v14H.5z" fill="#e4e4e4" stroke="#999" /><path d="M6.500 5.500h9v9h-9z" fill="#eee" stroke="#999" /><path d="M3 11.500h3" stroke="#999" strokeDasharray="1 1" /></Ico>;
const HouseIcon = () => <Ico>{house}</Ico>;
const ElevIcon = () => <Ico><path d="M0 8.500L8 1l8 7.500z" fill="#999" stroke="none" /><path d="M3.500 8.500h9v6h-9z" fill="#ddd" stroke="#999" /></Ico>;

function ViewTabs() {
  return (
    <div className="flex h-5 shrink-0 whitespace-nowrap bg-[#cbcbcb] text-[#444]" role="tablist">
      <button type="button" role="tab" className="flex w-[142px] items-center gap-[7px] pl-[5px] pt-px"><SheetIcon />L1 - Architectural</button>
      <div className="flex w-[128px] items-center justify-between bg-[#f4f4f4] pl-1 pr-[5px] pt-px">
        <button type="button" role="tab" aria-selected="true" className="flex items-center gap-2 font-semibold"><HouseIcon />{'{3D}'}</button>
        <button type="button" aria-label="Close view"><Ico w={10}><path d="M1 1l8 8M9 1L1 9" stroke="#555" strokeWidth="1.300" /></Ico></button>
      </div>
      <button type="button" role="tab" className="flex w-[161px] items-center gap-[7px] pl-[5px] pt-px"><ElevIcon />North - Architectural</button>
      <button type="button" role="tab" className="flex items-center gap-[7px] pl-[5px] pt-px"><SheetIcon />L2 - Architectural</button>
    </div>
  );
}

function Model() {
  return (
    <svg viewBox="400 217 1048 779" className="block w-full" role="img" aria-label="3D view of two room volumes and the selected floor">
      <defs>
        <linearGradient id="leftFace" x1="0" y1="0" x2="0" y2="1"><stop offset="0" stopColor="#9191ae" /><stop offset="1" stopColor="#8787a2" /></linearGradient>
        <linearGradient id="slabTop" x1="0" y1="0" x2=".6" y2="1"><stop offset="0" stopColor="#3f5ac6" /><stop offset=".3" stopColor="#4456cc" /><stop offset=".65" stopColor="#5a50da" /><stop offset="1" stopColor="#6858e2" /></linearGradient>
        <linearGradient id="slabDark" x1="0" y1="0" x2="1" y2="1"><stop offset="0" stopColor="#2d5088" /><stop offset=".45" stopColor="#2f4593" /><stop offset=".75" stopColor="#2b2c6c" /><stop offset="1" stopColor="#25215c" /></linearGradient>
        <linearGradient id="baseTop" x1="0" y1="0" x2="1" y2="1"><stop offset="0" stopColor="#5347cc" /><stop offset=".4" stopColor="#5b4fd8" /><stop offset="1" stopColor="#6859e4" /></linearGradient>
        <linearGradient id="baseDark" x1="0" y1="0" x2="1" y2="0"><stop offset="0" stopColor="#17163a" /><stop offset="1" stopColor="#383190" /></linearGradient>
        <pattern id="hatch" width="6" height="3" patternUnits="userSpaceOnUse" patternTransform="rotate(25)"><path d="M0 .5h6" stroke="#0c0c24" strokeOpacity=".45" fill="none" /></pattern>
        <pattern id="streak" width="4" height="10" patternUnits="userSpaceOnUse" patternTransform="rotate(4)"><path d="M.5 0v10" stroke="#2f2a90" strokeOpacity=".3" fill="none" /></pattern>
      </defs>

      {/* lower room */}
      <path d="M549.500 591l496-53 179 85-495 52z" fill="#b5b5ff" />
      <path d="M729.500 675l495-52v229l-495 53z" fill="#b2b2ff" />
      <path d="M549.500 591l180 84v230l-180-84z" fill="url(#leftFace)" />
      <path d="M729.500 801.500l316-33.500 179 84-495 53z" fill="url(#baseTop)" />
      <path d="M549.500 821l180-19.500V905z" fill="url(#baseDark)" />
      <path d="M549.500 821l180-19.500V905z" fill="url(#hatch)" />
      <path d="M729.500 905l316-137-316 33.500z" fill="url(#streak)" />
      <path d="M549.500 821l180 84v23l-180-84z" fill="#222222" />
      <path d="M729.500 905l495-53v23l-495 53z" fill="#7f7f7f" />
      <g fill="none" stroke="#15152e" strokeWidth="1">
        <path d="M549.500 591l496-53 179 85-495 52zM549.500 591v253l180 84 495-53V623M729.500 675v253M1044.500 538v230M549.500 821l496-53 179 84-495 53z" />
      </g>

      {/* upper room */}
      <path d="M549.500 316l496-53 179 85-495 52z" fill="#b5b5ff" />
      <path d="M729.500 400l495-52v229l-495 52z" fill="#b2b2ff" />
      <path d="M549.500 316l180 84v229l-180-84z" fill="url(#leftFace)" />

      {/* selected floor */}
      <path d="M549.500 545l180 84v23l-180-84z" fill="#5d7597" />
      <path d="M549.500 568l48-5 132 62v27l-180-84z" fill="#566b92" />
      <path d="M729.500 629l495-52v23l-495 52z" fill="#7192ea" />
      <path d="M1185 581l39-4v23z" fill="#8aa6e6" />
      <path d="M729.500 526l316-34 179 85-495 52z" fill="url(#slabTop)" />
      <path d="M549.500 545l180-19v103z" fill="url(#slabDark)" />
      <path d="M600 569l129-14v74z" fill="url(#hatch)" />
      <g fill="none" stroke="#15152e" strokeWidth="1">
        <path d="M549.500 316l496-53 179 85-495 52zM549.500 316v229M729.500 400v229M1224.500 348v229M1044.500 263v229M549.500 545l496-53 179 85-495 52z" />
      </g>
      <path d="M549.500 545v23l180 84 495-52v-23M729.500 629v23M1185 581l39 19M549.500 568l48-5" fill="none" stroke="#1f4fbf" strokeWidth="1" />

      {/* callout */}
      <path d="M1240 593l47-24v16h70q4 0 4 4v7q0 4-4 4h-70v17z" fill="#ea1c24" />
      <text x="1292" y="569" fill="#ea1c24" fontSize="33" fontWeight="700" fontFamily="Liberation Sans, Arial, sans-serif">Floor</text>

      {/* view cube edge */}
      <g fill="#efefef" stroke="#d0d0d0">
        <path d="M1448 324q-14 3-18 12l-10 5 10 7q6 5 18 7z" />
        <path d="M1432 336l8-4 6 3v9l-7 4-7-4zM1421 343h14M1440 332v16" fill="none" stroke="#b4b4b4" />
        <circle cx="1444" cy="343" r="4" fill="#fff" stroke="#b4b4b4" />
      </g>
    </svg>
  );
}

const VIEW_TOOLS: { label: string; icon: ReactNode }[] = [
  { label: 'Detail level', icon: <Ico><path d="M.5 2.500h15v11H.5z" fill="#fff" /><path d="M1 4h14M3 6h12M1 8h14M3 10h12M1 12h14" strokeDasharray="2 2" strokeWidth="2" stroke="#aaa" /></Ico> },
  { label: 'Visual style', icon: <Ico><path d="M1.500 5.500l4-4h9v8l-4 5h-9z" fill="#7ec0f0" stroke="#1e78c0" /><path d="M1.500 5.500h9v9M10.500 5.500l4-4" stroke="#1e78c0" /></Ico> },
  { label: 'Sun path', icon: <Ico><circle cx="6" cy="7" r="3.500" fill="#f2a30f" stroke="none" /><path d="M6 0v2M6 12v2M0 7h2M1.500 2.500l1.500 1.500M10.500 2.500L9 4M1.500 11.500L3 10" stroke="#f2a30f" strokeWidth="1.500" />{bulb(12, 9)}</Ico> },
  { label: 'Shadows', icon: <Ico><circle cx="7" cy="6" r="5.500" fill="#eee" stroke="#777" /><path d="M0 13.500h10" stroke="#aaa" strokeWidth="3" />{bulb(12, 9)}</Ico> },
  { label: 'Rendering dialog', icon: <Ico><path d="M4 4.500L.5 3.500l1 4 3 1q1 4 6 4M4 4.500q3-3 7-1l3-1q3 2 1 5M6 2.500l1-1h2l1 1" />{bulb(12, 9)}</Ico> },
  { label: 'Crop view', icon: <Ico><path d="M4.500 16V4.500H16M11.500 7v5H8" strokeWidth="1.500" /><path d="M0 10.500h3M10.500 0v3" stroke="#1e88d2" strokeWidth="2" />{redCross(9, 9, 6)}</Ico> },
  { label: 'Show crop region', icon: <Ico><path d="M4.500 16V4.500H16M9.500 8v4" strokeWidth="1.500" /><path d="M0 10.500h3M10.500 0v3" stroke="#1e88d2" strokeWidth="2" />{bulb(12, 9)}</Ico> },
  { label: 'Lock 3D view', icon: <Ico><path d="M2.500 8v7h5V8" fill="#fff" /><path d="M0 8l7-7h3l6 6-2 1-5-5-6 6z" fill="#999" stroke="#666" /><path d="M7.500 10.500h7v5h-7z" fill="#4fc0c6" stroke="#2a9aa0" /><path d="M11.500 10V8q2-2 3 0" stroke="#2a9aa0" /></Ico> },
  { label: 'Temporary hide', icon: <Ico><circle cx="3.500" cy="10" r="2.500" /><circle cx="9.500" cy="10" r="2.500" /><path d="M3 7l3-3M9 7l4-4 2 2M6 10h1" /></Ico> },
  { label: 'Reveal hidden', icon: <Ico><circle cx="8" cy="6" r="4" fill="#4fc0c6" stroke="none" /><path d="M6.500 11h3v3h-3z" fill="#777" stroke="none" /></Ico> },
  { label: 'Worksharing display', icon: <Ico><path d="M11.500 6V2.500h-9v9H6M5 5h4v3H5z" /><path d="M8.500 8.500h6v6h-6z" strokeDasharray="2 1" /></Ico> },
  { label: 'Temporary properties', icon: <Ico><path d="M1.500 14V5l4-4h8v9M1.500 5h8l4-4M9.500 5v6M5.500 1v9M1 9.500h8" /><path d="M2 7.500h7M3.500 7v8M7.500 7v8" stroke="#d33a3a" />{bulb(12, 9)}</Ico> },
  { label: 'Analytical model', icon: <Ico><path d="M3.500 7.500h5v6h-5zM1.500 6v7" /><path d="M6 6l3-3h5v5l-3 4V6z" fill={BLUE} stroke="#3b6a8c" /></Ico> },
  { label: 'Reveal constraints', icon: <Ico><path d="M1.500 0v13M14.500 0v6M2 3.500h12M2 12.500h6" /><path d="M4 7.500h6" strokeDasharray="2 1" />{bulb(12, 9)}</Ico> },
];

function ViewBar() {
  return (
    <div className="mt-px flex h-[18px] shrink-0 items-center bg-[#f3f3f3] pl-[2px]">
      <button type="button" className="w-[78px] whitespace-nowrap pl-1">1 : 100</button>
      {VIEW_TOOLS.map((t) => <Tool key={t.label} label={t.label} className="w-[26px]" icon={t.icon} />)}
      <div className="flex h-full flex-1 items-center bg-[#e8e8e8]">
        <button type="button" aria-label="Scroll left" className="flex h-full w-[17px] items-center justify-center border-r border-[#d4d4d4] bg-[#dedede]"><Ico w={6} h={10}><path d="M5 1L1 5l4 4" stroke="#888" strokeWidth="1.300" /></Ico></button>
        <div className="flex flex-1 justify-end pr-[227px]"><span className="h-[5px] w-4 bg-[#cdcdcd]" /></div>
      </div>
    </div>
  );
}

function StatusBar() {
  return (
    <footer className="shrink-0">
      <div className="flex h-6 items-center whitespace-nowrap bg-[#f5f5f5] pt-px">
        <p className="flex-1 pl-px">Click to select, TAB for alternates, CTRL adds, SHIFT unselects.</p>
        <button type="button" aria-label="Worksets" className="mr-[204px]">
          <Ico><path d="M1 3l3-2 3 2v8l-3 2-3-2z" fill="#6aa6d6" stroke="none" /><path d="M8 2l3-1 3 1v6l-3 2-3-2z" fill="#cf8462" stroke="none" /><path d="M5 7l3-2 3 2v7l-3 2-3-2z" fill="#4aa564" stroke="none" /><path d="M10 14l5-5" stroke="#2f80bd" strokeWidth="2" /></Ico>
        </button>
        <Chevron />
        <div className="ml-3 flex items-center text-[#8f8f8f]">
          <Ico><g stroke="#999"><circle cx="6" cy="7" r="2.500" /><path d="M1.500 14.500v-3h9v3zM8.500 1.500h6v4h-4l-2 2z" /></g></Ico>
          :0
        </div>
        <div className="ml-[25px] flex items-center gap-[10px]">
          <Tool label="Design options" icon={<Ico><path d="M.5 1.500h15v13H.5z" fill="#fff" stroke="#333" /><path d="M0 2.500h16" stroke="#333" strokeWidth="2" /><path d="M2.500 6.500h2M2.500 9.500h2M2.500 12.500h2M6 6.500h8M6 9.500h8M6 12.500h8" stroke="#333" /></Ico>} />
          <Tool label="Add to set" icon={<Ico><g stroke="#999"><path d="M2.500 10.500v-9h13v11h-8" fill="#fff" /><path d="M2 2h14" strokeWidth="2" /><path d="M4.500 5.500h1M7 5.500h7M4.500 8.500h1M7 8.500h7" /><path d="M0 13h6" strokeWidth="2" /><path d="M5 10l4 3-4 3z" fill="#999" /></g></Ico>} />
        </div>
        <div className="relative ml-[11px] flex w-[211px] items-center">
          <select aria-label="Design option" className="w-full appearance-none bg-transparent pt-[2px] text-[#a0a0a0] outline-none"><option>Main Model</option></select>
          <span className="pointer-events-none absolute right-[11px] top-2"><Chevron /></span>
        </div>
      </div>
      <div className="h-[2px] bg-[#20353f] pl-[245px]"><div className="h-full w-12 bg-[#4d5d66]" /></div>
    </footer>
  );
}

export default function App() {
  return (
    <div className="flex min-h-screen flex-col overflow-x-hidden bg-white font-['Open_Sans',sans-serif] text-xs text-[#3a3a3a]">
      <TitleBar />
      <RibbonTabs />
      <Ribbon />
      <QuickAccess />
      <div className="flex h-[26px] shrink-0 items-center bg-[#e9f0e3] pl-2 pt-[2px]">Modify | Floors</div>
      <main className="flex flex-1 border-t-2 border-[#c4c4c4]">
        <Properties />
        <div className="flex min-w-0 flex-1 flex-col">
          <ViewTabs />
          <div className="flex-1 bg-white"><Model /></div>
          <ViewBar />
          <div className="h-px bg-white" />
        </div>
      </main>
      <StatusBar />
    </div>
  );
}
